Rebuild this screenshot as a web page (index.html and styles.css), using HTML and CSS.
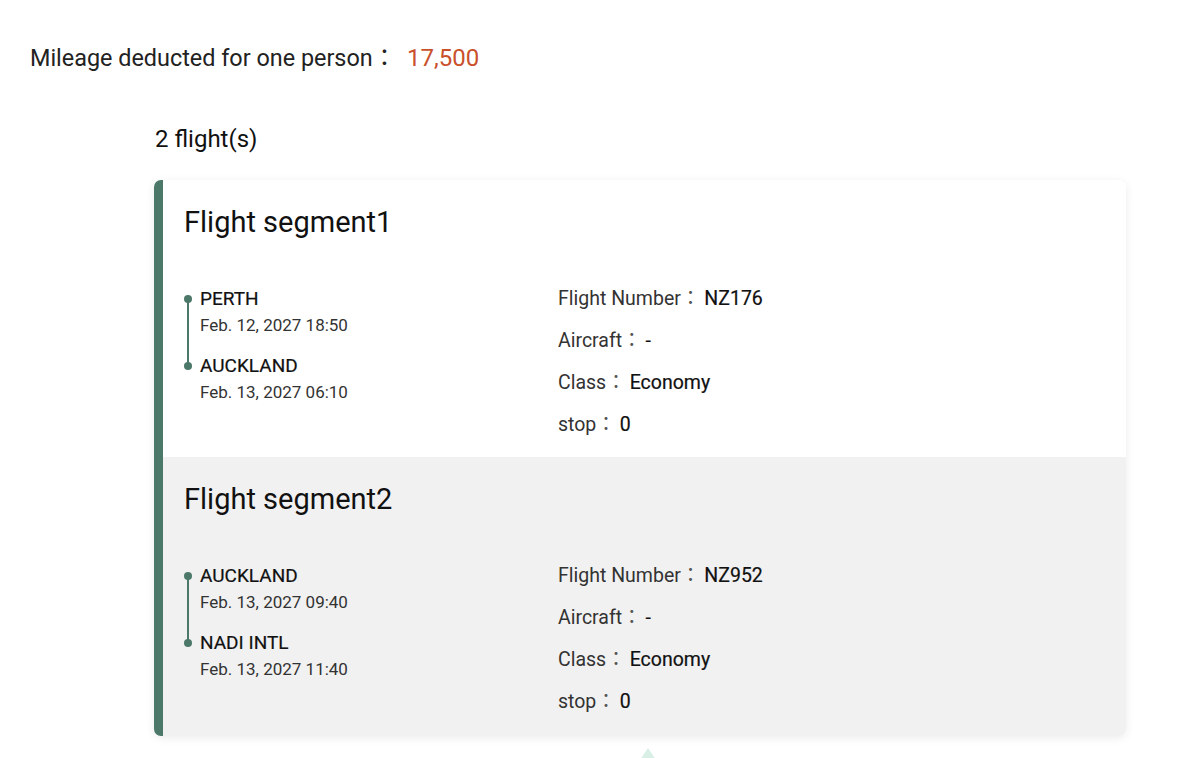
FILE: index.html
```html
<!DOCTYPE html>
<html lang="en">
<head>
<meta charset="utf-8">
<title>Flights</title>
<link rel="stylesheet" href="styles.css">
</head>
<body>
<div class="page">
  <div class="mileage">Mileage deducted for one person<span class="colon">：</span><span class="amount">17,500</span></div>
  <section class="flights">
    <h2 class="count">2 flight(s)</h2>
    <div class="card">
      <div class="segment">
        <h3 class="seg-title">Flight segment1</h3>
        <div class="seg-body">
          <div class="route">
            <div class="stop-item">
              <div class="city">PERTH</div>
              <div class="time">Feb. 12, 2027 18:50</div>
            </div>
            <div class="stop-item">
              <div class="city">AUCKLAND</div>
              <div class="time">Feb. 13, 2027 06:10</div>
            </div>
          </div>
          <div class="details">
            <div class="row"><span class="label">Flight Number<span class="colon">：</span></span><span class="value">NZ176</span></div>
            <div class="row"><span class="label">Aircraft<span class="colon">：</span></span><span class="value">-</span></div>
            <div class="row"><span class="label">Class<span class="colon">：</span></span><span class="value">Economy</span></div>
            <div class="row"><span class="label">stop<span class="colon">：</span></span><span class="value">0</span></div>
          </div>
        </div>
      </div>
      <div class="segment alt">
        <h3 class="seg-title">Flight segment2</h3>
        <div class="seg-body">
          <div class="route">
            <div class="stop-item">
              <div class="city">AUCKLAND</div>
              <div class="time">Feb. 13, 2027 09:40</div>
            </div>
            <div class="stop-item">
              <div class="city">NADI INTL</div>
              <div class="time">Feb. 13, 2027 11:40</div>
            </div>
          </div>
          <div class="details">
            <div class="row"><span class="label">Flight Number<span class="colon">：</span></span><span class="value">NZ952</span></div>
            <div class="row"><span class="label">Aircraft<span class="colon">：</span></span><span class="value">-</span></div>
            <div class="row"><span class="label">Class<span class="colon">：</span></span><span class="value">Economy</span></div>
            <div class="row"><span class="label">stop<span class="colon">：</span></span><span class="value">0</span></div>
          </div>
        </div>
      </div>
    </div>
    <div class="arrow"></div>
  </section>
</div>
</body>
</html>
```

FILE: styles.css
```css
* { box-sizing: border-box; }
html, body { margin: 0; padding: 0; background: #fff; }
body {
  font-family: Roboto, "Noto Sans CJK JP", sans-serif;
  color: #1a1a1a;
  overflow: hidden;
}
.page {
  padding: 41px 0 0 30px;
}
.mileage {
  font-size: 23.4px;
  line-height: 34px;
  color: #222;
  display: flex;
  align-items: center;
}
.mileage .colon { margin-right: 11px; }
.amount {
  color: #c9502a;
  font-size: 24px;
}
.flights {
  margin-left: 124px;
  width: 972px;
}
.count {
  margin: 47px 0 0 1px;
  font-size: 24px;
  font-weight: 400;
  line-height: 34px;
  color: #111;
}
.card {
  margin-top: 24px;
  border-left: 9px solid #4b7868;
  border-radius: 7px;
  box-shadow: 0 2px 10px rgba(0, 0, 0, 0.08);
  overflow: hidden;
  background: #fff;
}
.segment {
  padding: 22px 20px 11px 21px;
  background: #fff;
}
.segment.alt {
  background: #f1f1f1;
  padding-bottom: 13px;
}
.seg-title {
  margin: 0;
  font-size: 29px;
  font-weight: 400;
  line-height: 40px;
  color: #111;
}
.seg-body {
  margin-top: 36px;
  display: flex;
}
.route {
  width: 374px;
  padding-top: 7px;
  position: relative;
}
.route::before {
  content: "";
  position: absolute;
  left: 3px;
  top: 21px;
  width: 2px;
  height: 67px;
  background: #4b7868;
}
.stop-item {
  position: relative;
  padding-left: 16px;
  margin-bottom: 13px;
}
.stop-item::before {
  content: "";
  position: absolute;
  left: 0;
  top: 9.5px;
  width: 8px;
  height: 8px;
  border-radius: 50%;
  background: #4b7868;
}
.city {
  font-size: 19px;
  font-weight: 400;
  -webkit-text-stroke: 0.2px #111;
  line-height: 27px;
  color: #111;
}
.time {
  font-size: 17px;
  line-height: 27px;
  color: #333;
}
.details {
  display: flex;
  flex-direction: column;
}
.row {
  font-size: 19.5px;
  line-height: 42px;
  display: flex;
}
.label {
  color: #333;
}
.label .colon { margin-right: 4px; color: #555; }
.value {
  color: #111;
  font-weight: 400;
  -webkit-text-stroke: 0.2px #111;
}
.arrow {
  margin: 12px 0 0 486px;
  width: 0;
  height: 0;
  border-left: 8px solid transparent;
  border-right: 8px solid transparent;
  border-bottom: 12px solid #d8efe6;
}
```
